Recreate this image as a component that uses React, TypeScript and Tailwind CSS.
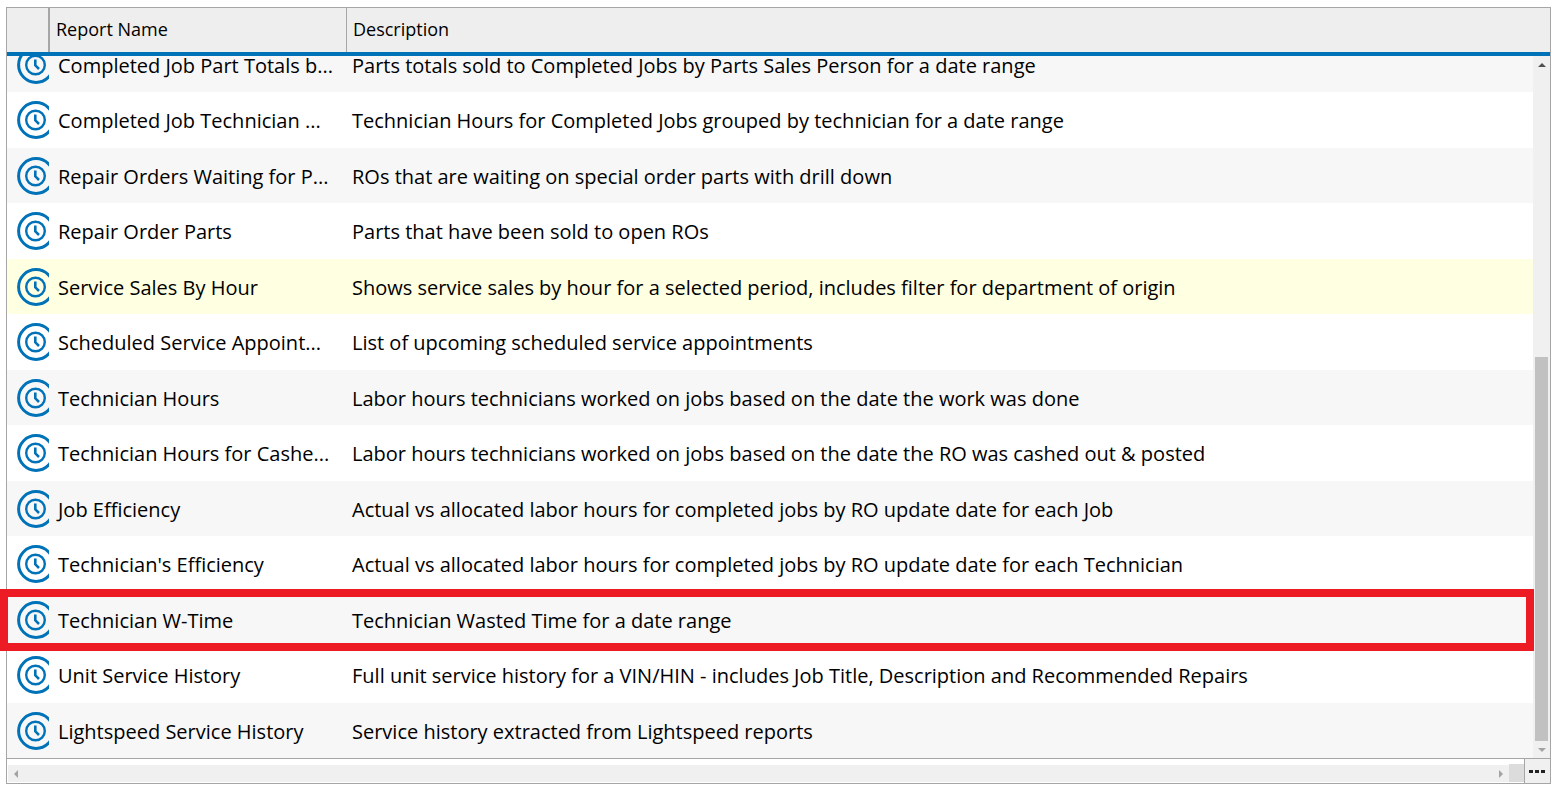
import { useLayoutEffect, useRef } from 'react';
import clsx from 'clsx';

type Report = {
    name: string;
    description: string;
    selected?: boolean;
};

const reports: Report[] = [
    { name: 'Completed Job Part Totals b...', description: 'Parts totals sold to Completed Jobs by Parts Sales Person for a date range' },
    { name: 'Completed Job Technician ...', description: 'Technician Hours for Completed Jobs grouped by technician for a date range' },
    { name: 'Repair Orders Waiting for P...', description: 'ROs that are waiting on special order parts with drill down' },
    { name: 'Repair Order Parts', description: 'Parts that have been sold to open ROs' },
    { name: 'Service Sales By Hour', description: 'Shows service sales by hour for a selected period, includes filter for department of origin', selected: true },
    { name: 'Scheduled Service Appoint...', description: 'List of upcoming scheduled service appointments' },
    { name: 'Technician Hours', description: 'Labor hours technicians worked on jobs based on the date the work was done' },
    { name: 'Technician Hours for Cashe...', description: 'Labor hours technicians worked on jobs based on the date the RO was cashed out & posted' },
    { name: 'Job Efficiency', description: 'Actual vs allocated labor hours for completed jobs by RO update date for each Job' },
    { name: "Technician's Efficiency", description: 'Actual vs allocated labor hours for completed jobs by RO update date for each Technician' },
    { name: 'Technician W-Time', description: 'Technician Wasted Time for a date range' },
    { name: 'Unit Service History', description: 'Full unit service history for a VIN/HIN - includes Job Title, Description and Recommended Repairs' },
    { name: 'Lightspeed Service History', description: 'Service history extracted from Lightspeed reports' },
];

function ClockIcon() {
    return (
        <svg viewBox="0 0 38 38" className="h-[38px] w-[38px] shrink-0" fill="none" stroke="#0072b8" aria-hidden="true">
            <circle cx="19" cy="19" r="17.4" strokeWidth="3" />
            <circle cx="18.5" cy="19" r="9.3" strokeWidth="2.4" />
            <path d="M18.3 13.5V19.3L22 23" strokeWidth="2.6" />
        </svg>
    );
}

function Arrow({ className, d }: { className?: string; d: string }) {
    return (
        <svg viewBox="0 0 8 8" className={clsx('h-2 w-2', className)} fill="currentColor" aria-hidden="true">
            <path d={d} />
        </svg>
    );
}

function VerticalScrollbar() {
    return (
        <div className="flex w-[17px] shrink-0 flex-col items-center bg-[#f0f0f0]">
            <button aria-label="Scroll up" className="flex h-[17px] w-full shrink-0 items-center justify-center text-[#505050]">
                <Arrow d="M0 6L4 2L8 6Z" />
            </button>
            <div className="flex w-full flex-1 flex-col justify-end px-0.5">
                <div className="h-[57.5%] bg-[#c1c1c1]" />
            </div>
            <button aria-label="Scroll down" className="flex h-[17px] w-full shrink-0 items-center justify-center text-[#a3a3a3]">
                <Arrow d="M0 2L4 6L8 2Z" />
            </button>
        </div>
    );
}

function Footer() {
    return (
        <div className="flex h-[25px] shrink-0 border-t border-[#a6a6a6] bg-white">
            <div className="mt-1.5 mb-px ml-px flex flex-1 items-center justify-between bg-[#f0f0f0] text-[#a3a3a3]">
                <button aria-label="Scroll left" className="flex w-[17px] justify-center pr-0.5">
                    <Arrow d="M6 0L2 4L6 8Z" />
                </button>
                <button aria-label="Scroll right" className="flex w-[17px] justify-center">
                    <Arrow d="M2 0L6 4L2 8Z" />
                </button>
            </div>
            <div className="mt-[5px] mb-px w-[15px] bg-[#dcdcdc]" />
            <button aria-label="More options" className="flex w-[26px] items-center justify-center gap-0.5 border-l border-[#a6a6a6] bg-[#f0f0f0] pr-0.5">
                <span className="h-[3px] w-1 bg-[#222]" />
                <span className="h-[3px] w-1 bg-[#222]" />
                <span className="h-[3px] w-1 bg-[#222]" />
            </button>
        </div>
    );
}

export default function App() {
    const scroller = useRef<HTMLDivElement>(null);

    // The list opens on its last rows
    useLayoutEffect(() => {
        if (scroller.current) {
            scroller.current.scrollTop = scroller.current.scrollHeight;
        }
    }, []);

    return (
        <main className="flex h-screen flex-col overflow-hidden bg-white pt-[7px] pr-1 pb-[3px] pl-1.5 font-['Segoe_UI','Open_Sans',sans-serif] text-black">
            <div className="flex min-h-0 flex-1 flex-col border border-[#a6a6a6]">
                <div className="relative flex min-h-0 flex-1">
                    <div ref={scroller} className="min-w-0 flex-1 overflow-hidden">
                        <table className="w-full table-fixed border-separate border-spacing-0 text-left whitespace-nowrap">
                            <thead className="sticky top-0 z-10 bg-[#eee] text-lg">
                                <tr className="h-12">
                                    <th className="w-[43px] border-b-4 border-[#0072b8] p-0" aria-label="Type">
                                        <div className="h-11 border-r-2 border-[#a6a6a6]" />
                                    </th>
                                    <th className="w-[297px] border-b-4 border-[#0072b8] p-0 font-normal">
                                        <div className="flex h-11 items-center border-r border-[#a6a6a6] px-1.5 pb-0.5">Report Name</div>
                                    </th>
                                    <th className="border-b-4 border-[#0072b8] p-0 font-normal">
                                        <div className="flex h-11 items-center px-1.5 pb-0.5">Description</div>
                                    </th>
                                </tr>
                            </thead>
                            <tbody className="text-xl">
                                {reports.map((report) => (
                                    <tr
                                        key={report.name}
                                        className={clsx(
                                            'h-[56px] odd:h-[55px]',
                                            report.selected ? 'bg-[#ffffe1]' : 'bg-white odd:bg-[#f7f7f7]'
                                        )}
                                    >
                                        <td className="p-0">
                                            <div className="flex w-[42px] overflow-hidden pl-2.5">
                                                <ClockIcon />
                                            </div>
                                        </td>
                                        <td className="pt-0.5 pr-0 pb-0 pl-2">{report.name}</td>
                                        <td className="pt-0.5 pr-0 pb-0 pl-[5px]">{report.description}</td>
                                    </tr>
                                ))}
                            </tbody>
                        </table>
                    </div>
                    <div className="flex flex-col">
                        <div className="h-12 shrink-0 border-b-4 border-[#0072b8] bg-[#eee]" />
                        <div className="flex flex-1">
                            <VerticalScrollbar />
                        </div>
                    </div>
                    {/* Callout around the Technician W-Time row */}
                    <div className="pointer-events-none absolute right-4 bottom-[107px] -left-[7px] z-20 h-[62px] border-8 border-[#ed1c24]" />
                </div>
                <Footer />
            </div>
        </main>
    );
}
